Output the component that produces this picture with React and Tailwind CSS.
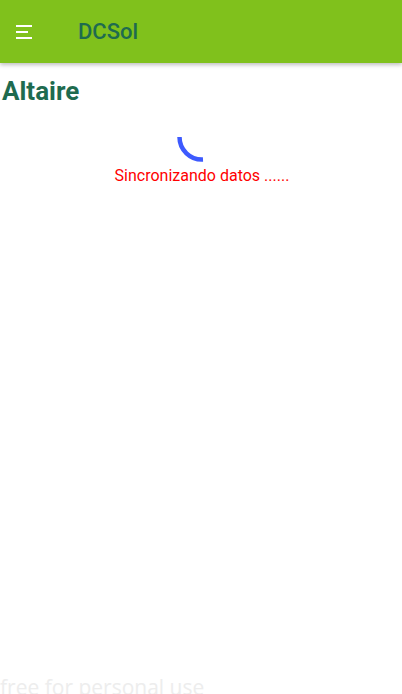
import React from "react";

export default function App() {
  return (
    <div className="relative h-[694px] w-[402px] overflow-hidden bg-white" style={{ fontFamily: "Roboto, 'Liberation Sans', sans-serif" }}>
      <header className="flex h-[63px] items-center bg-[#80c11c] shadow-[0_2px_4px_rgba(0,0,0,0.25)]">
        <div className="ml-4 flex w-4 flex-col gap-1">
          <span className="block h-[2px] w-4 bg-white" />
          <span className="block h-[2px] w-3 bg-white" />
          <span className="block h-[2px] w-4 bg-white" />
        </div>
        <h1 className="ml-[46px] text-[22px] font-medium leading-none text-[#1e6b4f]">DCSol</h1>
      </header>
      <h2 className="mt-[13px] pl-[2px] text-[26px] font-bold leading-[30px] text-[#1e6b4f]">Altaire</h2>
      <div className="mt-[4px] flex flex-col items-center">
        <div className="ml-[2px] h-[54px] w-[54px] shrink-0">
          <svg width="54" height="54" viewBox="0 0 54 54">
            <path d="M4.5 27 A22.5 22.5 0 0 0 28 49.5" fill="none" stroke="#3d5afe" strokeWidth="4.5" />
          </svg>
        </div>
        <p className="mt-[2px] ml-[2px] text-[16px] leading-5 text-[#ff0000]">Sincronizando datos ......</p>
      </div>
      <div className="absolute left-0 top-[673px] whitespace-nowrap text-[21px] leading-[28px] text-[#ededed]" style={{ fontFamily: "'Open Sans', sans-serif" }}>
        free for personal use
      </div>
    </div>
  );
}
